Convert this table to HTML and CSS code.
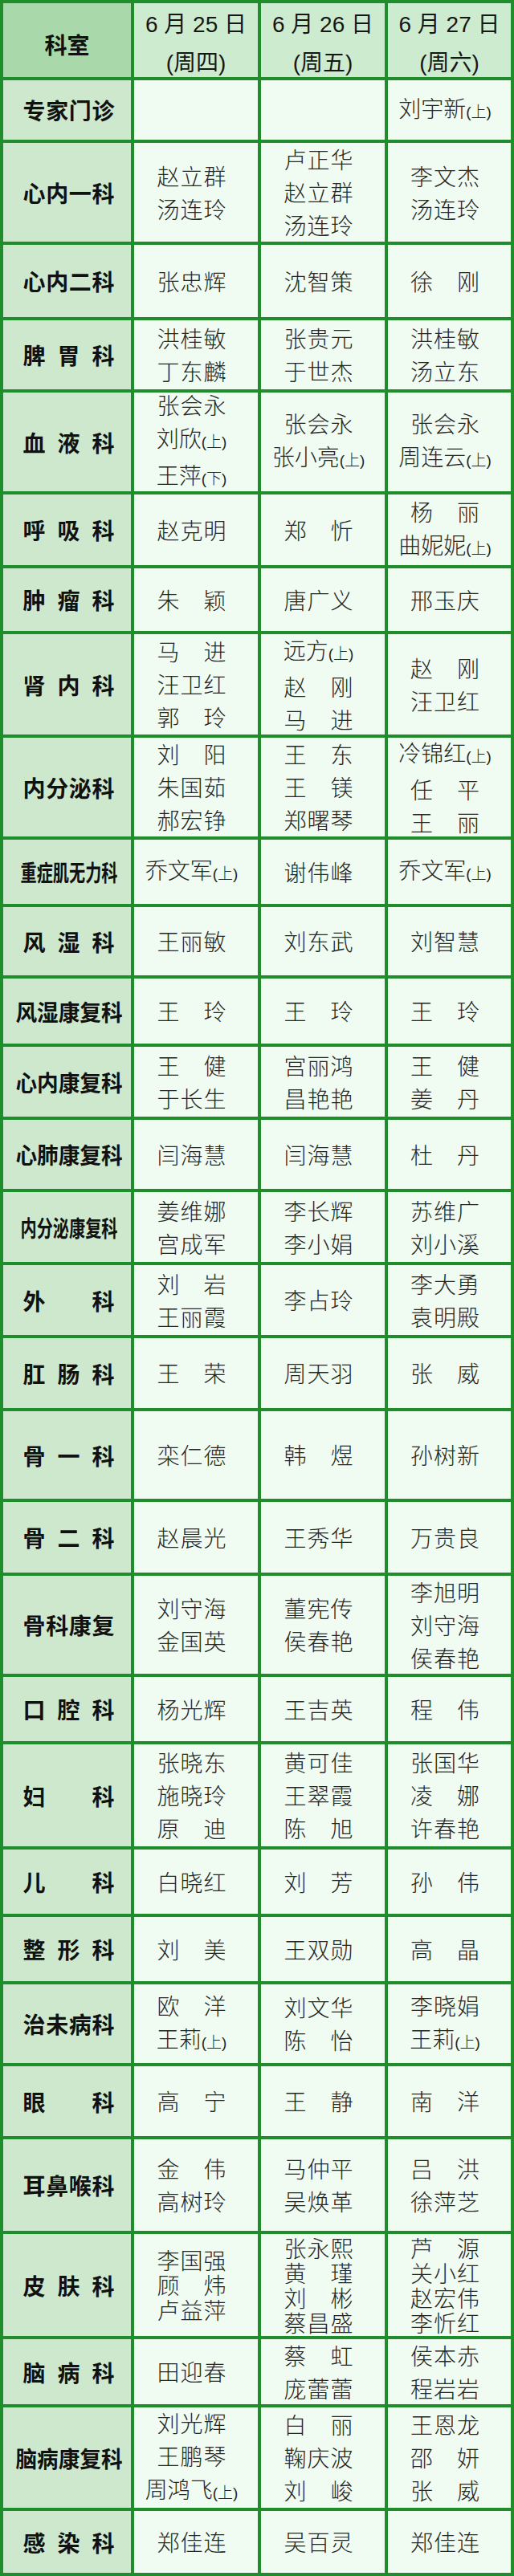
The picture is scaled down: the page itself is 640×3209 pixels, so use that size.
FILE: index.html
```html
<!DOCTYPE html>
<html lang="zh-CN">
<head>
<meta charset="utf-8">
<title>专家门诊排班表</title>
<link rel="stylesheet" href="styles.css">
</head>
<body>
<div class="sheet">
  <div class="c hd-first"><span class="dp plain">科室</span></div>
  <div class="c hd"><div class="date">6 月 25 日</div><div class="date">(周四)</div></div>
  <div class="c hd"><div class="date">6 月 26 日</div><div class="date">(周五)</div></div>
  <div class="c hd"><div class="date">6 月 27 日</div><div class="date">(周六)</div></div>

  <div class="c dept"><span class="dp">专家门诊</span></div>
  <div class="c cell"></div>
  <div class="c cell"></div>
  <div class="c cell"><div><span class="ns">刘宇新<span class="sfx">(上)</span></span></div></div>

  <div class="c dept"><span class="dp">心内一科</span></div>
  <div class="c cell"><div><span class="nm">赵立群</span><span class="nm">汤连玲</span></div></div>
  <div class="c cell"><div><span class="nm">卢正华</span><span class="nm">赵立群</span><span class="nm">汤连玲</span></div></div>
  <div class="c cell"><div><span class="nm">李文杰</span><span class="nm">汤连玲</span></div></div>

  <div class="c dept"><span class="dp">心内二科</span></div>
  <div class="c cell"><div><span class="nm">张忠辉</span></div></div>
  <div class="c cell"><div><span class="nm">沈智策</span></div></div>
  <div class="c cell"><div><span class="nm">徐 刚</span></div></div>

  <div class="c dept"><span class="dp">脾 胃 科</span></div>
  <div class="c cell"><div><span class="nm">洪桂敏</span><span class="nm">丁东麟</span></div></div>
  <div class="c cell"><div><span class="nm">张贵元</span><span class="nm">于世杰</span></div></div>
  <div class="c cell"><div><span class="nm">洪桂敏</span><span class="nm">汤立东</span></div></div>

  <div class="c dept"><span class="dp">血 液 科</span></div>
  <div class="c cell"><div><span class="nm">张会永</span><span class="ns">刘欣<span class="sfx">(上)</span></span><span class="ns">王萍<span class="sfx">(下)</span></span></div></div>
  <div class="c cell"><div><span class="nm">张会永</span><span class="ns">张小亮<span class="sfx">(上)</span></span></div></div>
  <div class="c cell"><div><span class="nm">张会永</span><span class="ns">周连云<span class="sfx">(上)</span></span></div></div>

  <div class="c dept"><span class="dp">呼 吸 科</span></div>
  <div class="c cell"><div><span class="nm">赵克明</span></div></div>
  <div class="c cell"><div><span class="nm">郑 忻</span></div></div>
  <div class="c cell"><div><span class="nm">杨 丽</span><span class="ns">曲妮妮<span class="sfx">(上)</span></span></div></div>

  <div class="c dept"><span class="dp">肿 瘤 科</span></div>
  <div class="c cell"><div><span class="nm">朱 颖</span></div></div>
  <div class="c cell"><div><span class="nm">唐广义</span></div></div>
  <div class="c cell"><div><span class="nm">邢玉庆</span></div></div>

  <div class="c dept"><span class="dp">肾 内 科</span></div>
  <div class="c cell"><div><span class="nm">马 进</span><span class="nm">汪卫红</span><span class="nm">郭 玲</span></div></div>
  <div class="c cell"><div><span class="ns">远方<span class="sfx">(上)</span></span><span class="nm">赵 刚</span><span class="nm">马 进</span></div></div>
  <div class="c cell"><div><span class="nm">赵 刚</span><span class="nm">汪卫红</span></div></div>

  <div class="c dept"><span class="dp">内分泌科</span></div>
  <div class="c cell"><div><span class="nm">刘 阳</span><span class="nm">朱国茹</span><span class="nm">郝宏铮</span></div></div>
  <div class="c cell"><div><span class="nm">王 东</span><span class="nm">王 镁</span><span class="nm">郑曙琴</span></div></div>
  <div class="c cell"><div><span class="ns">冷锦红<span class="sfx">(上)</span></span><span class="nm">任 平</span><span class="nm">王 丽</span></div></div>

  <div class="c dept"><span class="dp six">重症肌无力科</span></div>
  <div class="c cell"><div><span class="ns">乔文军<span class="sfx">(上)</span></span></div></div>
  <div class="c cell"><div><span class="nm">谢伟峰</span></div></div>
  <div class="c cell"><div><span class="ns">乔文军<span class="sfx">(上)</span></span></div></div>

  <div class="c dept"><span class="dp">风 湿 科</span></div>
  <div class="c cell"><div><span class="nm">王丽敏</span></div></div>
  <div class="c cell"><div><span class="nm">刘东武</span></div></div>
  <div class="c cell"><div><span class="nm">刘智慧</span></div></div>

  <div class="c dept"><span class="dp five">风湿康复科</span></div>
  <div class="c cell"><div><span class="nm">王 玲</span></div></div>
  <div class="c cell"><div><span class="nm">王 玲</span></div></div>
  <div class="c cell"><div><span class="nm">王 玲</span></div></div>

  <div class="c dept"><span class="dp five">心内康复科</span></div>
  <div class="c cell"><div><span class="nm">王 健</span><span class="nm">于长生</span></div></div>
  <div class="c cell"><div><span class="nm">宫丽鸿</span><span class="nm">昌艳艳</span></div></div>
  <div class="c cell"><div><span class="nm">王 健</span><span class="nm">姜 丹</span></div></div>

  <div class="c dept"><span class="dp five">心肺康复科</span></div>
  <div class="c cell"><div><span class="nm">闫海慧</span></div></div>
  <div class="c cell"><div><span class="nm">闫海慧</span></div></div>
  <div class="c cell"><div><span class="nm">杜 丹</span></div></div>

  <div class="c dept"><span class="dp six">内分泌康复科</span></div>
  <div class="c cell"><div><span class="nm">姜维娜</span><span class="nm">宫成军</span></div></div>
  <div class="c cell"><div><span class="nm">李长辉</span><span class="nm">李小娟</span></div></div>
  <div class="c cell"><div><span class="nm">苏维广</span><span class="nm">刘小溪</span></div></div>

  <div class="c dept"><span class="dp">外 科</span></div>
  <div class="c cell"><div><span class="nm">刘 岩</span><span class="nm">王丽霞</span></div></div>
  <div class="c cell"><div><span class="nm">李占玲</span></div></div>
  <div class="c cell"><div><span class="nm">李大勇</span><span class="nm">袁明殿</span></div></div>

  <div class="c dept"><span class="dp">肛 肠 科</span></div>
  <div class="c cell"><div><span class="nm">王 荣</span></div></div>
  <div class="c cell"><div><span class="nm">周天羽</span></div></div>
  <div class="c cell"><div><span class="nm">张 威</span></div></div>

  <div class="c dept"><span class="dp">骨 一 科</span></div>
  <div class="c cell"><div><span class="nm">栾仁德</span></div></div>
  <div class="c cell"><div><span class="nm">韩 煜</span></div></div>
  <div class="c cell"><div><span class="nm">孙树新</span></div></div>

  <div class="c dept"><span class="dp">骨 二 科</span></div>
  <div class="c cell"><div><span class="nm">赵晨光</span></div></div>
  <div class="c cell"><div><span class="nm">王秀华</span></div></div>
  <div class="c cell"><div><span class="nm">万贵良</span></div></div>

  <div class="c dept"><span class="dp">骨科康复</span></div>
  <div class="c cell"><div><span class="nm">刘守海</span><span class="nm">金国英</span></div></div>
  <div class="c cell"><div><span class="nm">董宪传</span><span class="nm">侯春艳</span></div></div>
  <div class="c cell"><div><span class="nm">李旭明</span><span class="nm">刘守海</span><span class="nm">侯春艳</span></div></div>

  <div class="c dept"><span class="dp">口 腔 科</span></div>
  <div class="c cell"><div><span class="nm">杨光辉</span></div></div>
  <div class="c cell"><div><span class="nm">王吉英</span></div></div>
  <div class="c cell"><div><span class="nm">程 伟</span></div></div>

  <div class="c dept"><span class="dp">妇 科</span></div>
  <div class="c cell"><div><span class="nm">张晓东</span><span class="nm">施晓玲</span><span class="nm">原 迪</span></div></div>
  <div class="c cell"><div><span class="nm">黄可佳</span><span class="nm">王翠霞</span><span class="nm">陈 旭</span></div></div>
  <div class="c cell"><div><span class="nm">张国华</span><span class="nm">凌 娜</span><span class="nm">许春艳</span></div></div>

  <div class="c dept"><span class="dp">儿 科</span></div>
  <div class="c cell"><div><span class="nm">白晓红</span></div></div>
  <div class="c cell"><div><span class="nm">刘 芳</span></div></div>
  <div class="c cell"><div><span class="nm">孙 伟</span></div></div>

  <div class="c dept"><span class="dp">整 形 科</span></div>
  <div class="c cell"><div><span class="nm">刘 美</span></div></div>
  <div class="c cell"><div><span class="nm">王双勋</span></div></div>
  <div class="c cell"><div><span class="nm">高 晶</span></div></div>

  <div class="c dept"><span class="dp">治未病科</span></div>
  <div class="c cell"><div><span class="nm">欧 洋</span><span class="ns">王莉<span class="sfx">(上)</span></span></div></div>
  <div class="c cell"><div><span class="nm">刘文华</span><span class="nm">陈 怡</span></div></div>
  <div class="c cell"><div><span class="nm">李晓娟</span><span class="ns">王莉<span class="sfx">(上)</span></span></div></div>

  <div class="c dept"><span class="dp">眼 科</span></div>
  <div class="c cell"><div><span class="nm">高 宁</span></div></div>
  <div class="c cell"><div><span class="nm">王 静</span></div></div>
  <div class="c cell"><div><span class="nm">南 洋</span></div></div>

  <div class="c dept"><span class="dp">耳鼻喉科</span></div>
  <div class="c cell"><div><span class="nm">金 伟</span><span class="nm">高树玲</span></div></div>
  <div class="c cell"><div><span class="nm">马仲平</span><span class="nm">吴焕革</span></div></div>
  <div class="c cell"><div><span class="nm">吕 洪</span><span class="nm">徐萍芝</span></div></div>

  <div class="c dept"><span class="dp">皮 肤 科</span></div>
  <div class="c cell tight"><div><span class="nm">李国强</span><span class="nm">顾 炜</span><span class="nm">卢益萍</span></div></div>
  <div class="c cell tight"><div><span class="nm">张永熙</span><span class="nm">黄 瑾</span><span class="nm">刘 彬</span><span class="nm">蔡昌盛</span></div></div>
  <div class="c cell tight"><div><span class="nm">芦 源</span><span class="nm">关小红</span><span class="nm">赵宏伟</span><span class="nm">李忻红</span></div></div>

  <div class="c dept"><span class="dp">脑 病 科</span></div>
  <div class="c cell"><div><span class="nm">田迎春</span></div></div>
  <div class="c cell"><div><span class="nm">蔡 虹</span><span class="nm">庞蕾蕾</span></div></div>
  <div class="c cell"><div><span class="nm">侯本赤</span><span class="nm">程岩岩</span></div></div>

  <div class="c dept"><span class="dp five">脑病康复科</span></div>
  <div class="c cell"><div><span class="nm">刘光辉</span><span class="nm">王鹏琴</span><span class="ns">周鸿飞<span class="sfx">(上)</span></span></div></div>
  <div class="c cell"><div><span class="nm">白 丽</span><span class="nm">鞠庆波</span><span class="nm">刘 峻</span></div></div>
  <div class="c cell"><div><span class="nm">王恩龙</span><span class="nm">邵 妍</span><span class="nm">张 威</span></div></div>

  <div class="c dept"><span class="dp">感 染 科</span></div>
  <div class="c cell"><div><span class="nm">郑佳连</span></div></div>
  <div class="c cell"><div><span class="nm">吴百灵</span></div></div>
  <div class="c cell"><div><span class="nm">郑佳连</span></div></div>
</div>
</body>
</html>
```
FILE: styles.css
```css
html, body {
  margin: 0;
  padding: 0;
  background: #ffffff;
}

.sheet {
  display: grid;
  grid-template-columns: 159px 154px 154px 153px;
  grid-template-rows:
    92px 74px 123px 90px 86px 123px 88px 78px
    125px 123px 80px 85px 81px 87px 86px 87px
    87px 87px 109px 88px 122px 80px 127px 80px
    80px 98px 87px 114px 127px 81px 125px 77px;
  gap: 4px;
  padding: 4px;
  background: #1f8d2c;
  font-family: "Noto Sans CJK SC", "Noto Sans", sans-serif;
  color: #1a1a1a;
}

.c {
  display: flex;
  align-items: center;
  justify-content: center;
  min-width: 0;
}

.hd-first {
  background: #a9d9aa;
  padding-top: 10px;
  box-sizing: border-box;
}

.hd {
  background: #cdeccf;
  flex-direction: column;
  padding-top: 10px;
  box-sizing: border-box;
  font-family: "Liberation Sans", "Noto Sans CJK SC", sans-serif;
  font-size: 28px;
  line-height: 48px;
  color: #161616;
}

.date {
  white-space: pre;
}

.dept {
  background: #cde8cd;
  padding-left: 4px;
  box-sizing: border-box;
}

.dp {
  display: inline-block;
  width: 114px;
  font-size: 28px;
  font-weight: 700;
  line-height: 34px;
  color: #111111;
  text-align: justify;
  text-align-last: justify;
  white-space: nowrap;
}

.dp.plain {
  width: auto;
  text-align: center;
  text-align-last: center;
}

.dp.five {
  width: 140px;
  transform: scaleX(0.95);
  text-align: center;
  text-align-last: center;
}

.dp.six {
  width: 168px;
  flex-shrink: 0;
  transform: scaleX(0.72);
  text-align: center;
  text-align-last: center;
}

.cell {
  background: #f0fcf1;
  padding-right: 11px;
  box-sizing: border-box;
  font-size: 28px;
  font-weight: 300;
  line-height: 41px;
  color: #262626;
  text-align: center;
}

.cell.tight {
  line-height: 31px;
}

.nm {
  display: block;
  width: 86px;
  margin: 0 auto;
  text-align: justify;
  text-align-last: justify;
  white-space: nowrap;
}

.ns {
  display: block;
  white-space: nowrap;
}

.sfx {
  font-family: "Liberation Sans", "Noto Sans CJK SC", sans-serif;
  font-size: 19px;
}
```
